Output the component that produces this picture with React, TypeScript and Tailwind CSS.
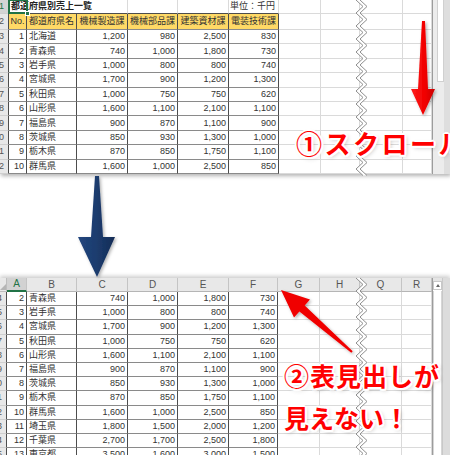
import React from 'react';

type Row = [string, string, string, string, string, string];

const DATA: Row[] = [
  ['1', '北海道', '1,200', '980', '2,500', '830'],
  ['2', '青森県', '740', '1,000', '1,800', '730'],
  ['3', '岩手県', '1,000', '800', '800', '740'],
  ['4', '宮城県', '1,700', '900', '1,200', '1,300'],
  ['5', '秋田県', '1,000', '750', '750', '620'],
  ['6', '山形県', '1,600', '1,100', '2,100', '1,100'],
  ['7', '福島県', '900', '870', '1,100', '900'],
  ['8', '茨城県', '850', '930', '1,300', '1,000'],
  ['9', '栃木県', '870', '850', '1,750', '1,100'],
  ['10', '群馬県', '1,600', '1,000', '2,500', '850'],
  ['11', '埼玉県', '1,800', '1,500', '2,000', '1,200'],
  ['12', '千葉県', '2,700', '1,700', '2,500', '1,800'],
  ['13', '東京都', '3,500', '1,600', '3,000', '1,500'],
];

const HEADS = ['No.', '都道府県名', '機械製造課', '機械部品課', '建築資材課', '電装技術課'];

// row header, A..F, G, H, Q, R
const TW = ['w-[9px]', 'w-[18px]', 'w-[50px]', 'w-[51px]', 'w-[50px]', 'w-[51px]', 'w-[50px]', 'w-[42px]', 'w-[39px]', 'w-[43px]', 'w-[29px]'];
const BW = ['w-[7px]', 'w-[20px]', 'w-[50px]', 'w-[51px]', 'w-[50px]', 'w-[51px]', 'w-[49px]', 'w-[42px]', 'w-[40px]', 'w-[42px]', 'w-[30px]'];
const LETTERS = ['A', 'B', 'C', 'D', 'E', 'F', 'G', 'H', 'Q', 'R'];

const cell = 'shrink-0 h-full flex items-center overflow-hidden whitespace-nowrap';
const grid = 'border-r border-b border-[#dadada]';
const tbl = 'border-r border-b border-r-[#4d4d4d] border-b-[#8a8a8a] text-[#333]';

function RowHead({ w, n, hl }: { w: string; n: string; hl?: boolean }) {
  return (
    <div
      className={`${cell} ${w} justify-end pr-[4px] border-b border-b-[#cfcfcf] border-r border-r-[#4d4d4d] ${
        hl ? 'bg-[#d4d4d4] text-[#217346]' : 'bg-[#e8e8e8] text-[#555]'
      }`}
    >
      {n}
    </div>
  );
}

function DataRow({ r, widths, h }: { r: Row; widths: string[]; h: string }) {
  return (
    <div className={`flex ${h}`}>
      <RowHead w={widths[0]} n={String(Number(r[0]) + 2)} />
      <div className={`${cell} ${widths[1]} ${tbl} justify-end pr-[2px]`}>{r[0]}</div>
      <div className={`${cell} ${widths[2]} ${tbl} pl-[2px]`}>{r[1]}</div>
      {r.slice(2).map((v, i) => (
        <div key={i} className={`${cell} ${widths[3 + i]} ${tbl} justify-end pr-[2px]`}>
          {v}
        </div>
      ))}
      {widths.slice(7).map((w, i) => (
        <div key={i} className={`${cell} ${w} ${grid}`} />
      ))}
    </div>
  );
}

function zigPoints(y0: number, y1: number, x: number) {
  const pts: [number, number][] = [];
  let i = 0;
  for (let y = y0; y <= y1 + 7; y += 6.5) {
    pts.push([i % 2 === 0 ? x : x + 7, y]);
    i++;
  }
  return pts;
}

function Zigzag({ y0, y1 }: { y0: number; y1: number }) {
  const left = zigPoints(y0, y1, 356);
  const right = left.map(([x, y]) => [x + 4, y] as [number, number]);
  const band = [...left, ...right.slice().reverse()].map((p) => p.join(',')).join(' ');
  return (
    <g>
      <polygon points={band} fill="#fff" />
      <polyline points={left.map((p) => p.join(',')).join(' ')} fill="none" stroke="#8f8f8f" strokeWidth="1" />
      <polyline points={right.map((p) => p.join(',')).join(' ')} fill="none" stroke="#8f8f8f" strokeWidth="1" />
    </g>
  );
}

function TopSheet() {
  return (
    <div className="relative z-10 flex h-[174px] bg-white shadow-[1px_2px_4px_rgba(0,0,0,0.3)]">
      <div className="w-[432px] flex flex-col overflow-hidden">
        <div className="flex h-[14px]">
          <RowHead w={TW[0]} n="1" hl />
          <div className={`shrink-0 h-full flex items-center whitespace-nowrap relative z-10 ${TW[1]} border-b border-b-[#4d4d4d]`}>
            <span className="pl-[2px] font-bold text-[#222]">都道府県別売上一覧</span>
            <div className="absolute top-[-1px] left-[-1px] right-[-1px] bottom-[-1px] border-2 border-[#217346]" />
            <div className="absolute right-[-3px] bottom-[-3px] w-[5px] h-[5px] bg-[#217346] border border-white" />
          </div>
          <div className={`${cell} ${TW[2]} border-b border-b-[#4d4d4d]`} />
          <div className={`${cell} ${TW[3]} border-b border-r border-b-[#4d4d4d] border-r-[#dadada]`} />
          <div className={`${cell} ${TW[4]} border-b border-r border-b-[#4d4d4d] border-r-[#dadada]`} />
          <div className={`${cell} ${TW[5]} border-b border-r border-b-[#4d4d4d] border-r-[#dadada]`} />
          <div className={`${cell} ${TW[6]} border-b border-r border-b-[#4d4d4d] border-r-[#dadada] pl-[1px] text-[#333]`}>単位：千円</div>
          {TW.slice(7).map((w, i) => (
            <div key={i} className={`${cell} ${w} ${grid}`} />
          ))}
        </div>
        <div className="flex h-[16px]">
          <RowHead w={TW[0]} n="2" />
          {HEADS.map((t, i) => (
            <div key={i} className={`${cell} ${TW[1 + i]} ${tbl} justify-center bg-[#ffd966]`}>
              {t}
            </div>
          ))}
          {TW.slice(7).map((w, i) => (
            <div key={i} className={`${cell} ${w} ${grid}`} />
          ))}
        </div>
        {DATA.slice(0, 10).map((r) => (
          <DataRow key={r[0]} r={r} widths={TW} h="h-[14.4px]" />
        ))}
      </div>
      <div className="w-[18px] h-full flex bg-[#ececec] border-l border-l-[#9c9c9c]">
        <div className="w-[4px]" />
        <div className="w-[7px] flex flex-col">
          <div className="h-[82px] bg-white border-x border-b border-[#d0d0d0]" />
        </div>
        <div className="flex-1 bg-[#dedede]" />
      </div>
    </div>
  );
}

function BottomSheet() {
  return (
    <div className="flex h-[177px] bg-white shadow-[0_-2px_4px_rgba(0,0,0,0.2)]">
      <div className="w-[432px] flex flex-col overflow-hidden">
        <div className="flex h-[14px] shrink-0 text-[10px]">
          <div className={`${cell} ${BW[0]} bg-[#e8e8e8] border-r border-b border-[#bdbdbd] items-end justify-end`}>
            <div className="w-0 h-0 border-l-[6px] border-l-transparent border-b-[6px] border-b-[#b5b5b5] mb-[1px]" />
          </div>
          {LETTERS.map((l, i) => (
            <div
              key={l}
              className={`${cell} ${BW[1 + i]} justify-center border-r border-r-[#c4c4c4] ${
                i === 0
                  ? 'bg-[#d2d2d2] text-[#217346] border-b-2 border-b-[#217346]'
                  : 'bg-[#e8e8e8] text-[#555] border-b border-b-[#b5b5b5]'
              }`}
            >
              {l}
            </div>
          ))}
        </div>
        {DATA.slice(1).map((r) => (
          <DataRow key={r[0]} r={r} widths={BW} h="h-[14.2px] shrink-0" />
        ))}
      </div>
      <div className="w-[18px] h-full flex bg-[#e4e4e4] border-l border-l-[#9c9c9c]">
        <div className="w-[10px] flex flex-col bg-white border-r border-[#c8c8c8]">
          <div className="h-[3px] bg-[#e4e4e4]" />
          <div className="h-[9px] flex items-center justify-center border border-[#c8c8c8] bg-white">
            <div className="w-0 h-0 border-x-[2.5px] border-x-transparent border-b-[3px] border-b-[#666]" />
          </div>
          <div className="flex-1 border-x border-[#d6d6d6] mt-[1px]" />
        </div>
        <div className="flex-1 bg-[#dcdcdc]" />
      </div>
    </div>
  );
}

const OUTLINE =
  '[text-shadow:2px_0_#fff,-2px_0_#fff,0_2px_#fff,0_-2px_#fff,1.5px_1.5px_#fff,-1.5px_-1.5px_#fff,1.5px_-1.5px_#fff,-1.5px_1.5px_#fff,2px_2px_4px_rgba(0,0,0,0.25)]';

export default function App() {
  return (
    <div className="relative w-[450px] h-[455px] overflow-hidden bg-white font-['Liberation_Sans','Noto_Sans_CJK_JP',sans-serif] text-[9px] leading-none">
      <TopSheet />
      <div className="h-[104px]" />
      <BottomSheet />

      <svg className="absolute inset-0 z-20 pointer-events-none" width="450" height="455" viewBox="0 0 450 455">
        <defs>
          <filter id="sh" x="-30%" y="-30%" width="160%" height="160%">
            <feDropShadow dx="1.5" dy="1.5" stdDeviation="1.5" floodColor="#000" floodOpacity="0.3" />
          </filter>
          <linearGradient id="red" x1="0" x2="1" y1="0" y2="0">
            <stop offset="0" stopColor="#ff1a1a" />
            <stop offset="0.6" stopColor="#f00000" />
            <stop offset="1" stopColor="#c80000" />
          </linearGradient>
          <linearGradient id="navy" x1="0" x2="1" y1="0" y2="0">
            <stop offset="0" stopColor="#22467e" />
            <stop offset="0.5" stopColor="#1c3c6e" />
            <stop offset="1" stopColor="#142c55" />
          </linearGradient>
        </defs>
        <Zigzag y0={0} y1={174} />
        <Zigzag y0={278} y1={455} />
        <polygon
          points="422,21 425,21 428,89 435,89 423,115 411,89 418,89"
          fill="url(#red)"
          filter="url(#sh)"
        />
        <polygon
          points="95,176 99,176 103,237 115,237 97,277 78,237 91,237"
          fill="url(#navy)"
          filter="url(#sh)"
        />
        <polygon
          points="352.7,351.2 304.7,305.5 310,299.4 281,290 294,317.6 299.4,311.5 351.3,352.8"
          fill="#f00000"
          filter="url(#sh)"
        />
      </svg>

      <div className={`absolute z-30 left-[296px] top-[130px] whitespace-nowrap font-['Noto_Sans_CJK_JP',sans-serif] font-bold text-[26px] leading-none tracking-[2.5px] text-[#ff0000] ${OUTLINE}`}>
        ①スクロール
      </div>
      <div className={`absolute z-30 left-[284px] top-[363px] whitespace-nowrap font-['Noto_Sans_CJK_JP',sans-serif] font-bold text-[25px] leading-none tracking-[1px] text-[#ff0000] ${OUTLINE}`}>
        ②表見出しが
      </div>
      <div className={`absolute z-30 left-[284px] top-[405px] whitespace-nowrap font-['Noto_Sans_CJK_JP',sans-serif] font-bold text-[25px] leading-none text-[#ff0000] ${OUTLINE}`}>
        見えない！
      </div>
    </div>
  );
}
